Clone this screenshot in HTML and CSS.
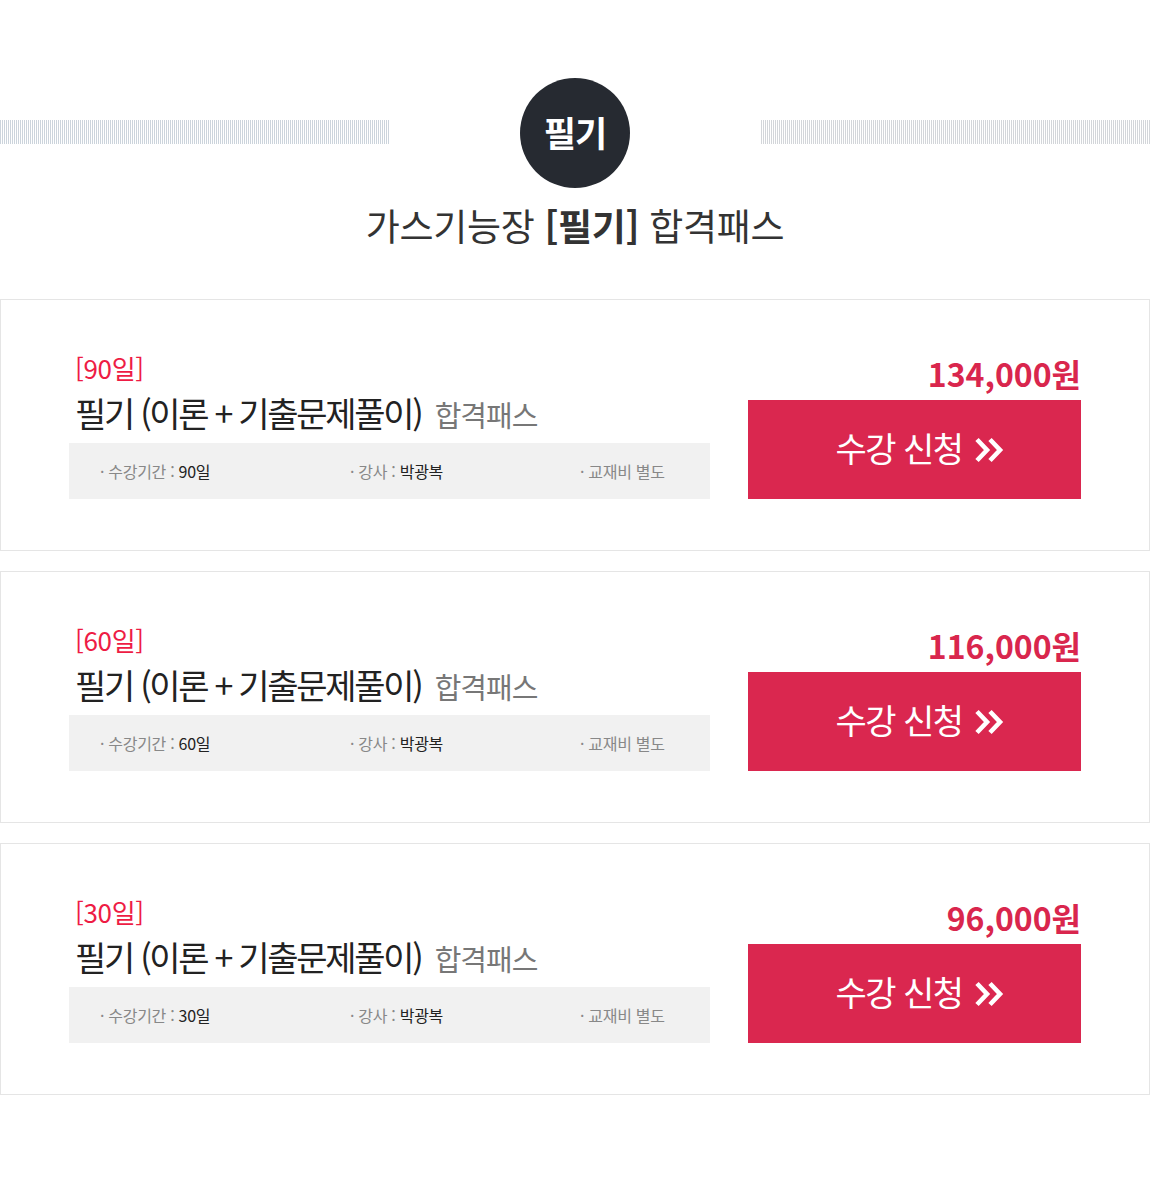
FILE: index.html
```html
<!DOCTYPE html>
<html lang="ko">
<head>
<meta charset="utf-8">
<link rel="stylesheet" href="styles.css">
</head>
<body>
<div class="page">
  <header class="head">
    <div class="head-row">
      <div class="stripe stripe-left"></div>
      <div class="badge-wrap"><div class="badge">필기</div></div>
      <div class="stripe stripe-right"></div>
    </div>
    <h1 class="head-title">가스기능장 <b>[필기]</b> 합격패스</h1>
  </header>

  <section class="card">
    <div class="card-left">
      <div class="tag">[90일]</div>
      <div class="title">필기 (이론 + 기출문제풀이) <span class="sub">합격패스</span></div>
      <div class="info">
        <div class="info-item">· 수강기간 : <span class="val">90일</span></div>
        <div class="info-item">· 강사 : <span class="val">박광복</span></div>
        <div class="info-item">· 교재비 별도</div>
      </div>
    </div>
    <div class="card-right">
      <div class="price">134,000원</div>
      <a class="btn" href="#">수강 신청 <svg class="chev" width="32" height="26" viewBox="0 0 32 26"><path d="M3 2.5 L13 13 L3 23.5 M16 2.5 L26 13 L16 23.5" fill="none" stroke="#fff" stroke-width="4.6"/></svg></a>
    </div>
  </section>

  <section class="card">
    <div class="card-left">
      <div class="tag">[60일]</div>
      <div class="title">필기 (이론 + 기출문제풀이) <span class="sub">합격패스</span></div>
      <div class="info">
        <div class="info-item">· 수강기간 : <span class="val">60일</span></div>
        <div class="info-item">· 강사 : <span class="val">박광복</span></div>
        <div class="info-item">· 교재비 별도</div>
      </div>
    </div>
    <div class="card-right">
      <div class="price">116,000원</div>
      <a class="btn" href="#">수강 신청 <svg class="chev" width="32" height="26" viewBox="0 0 32 26"><path d="M3 2.5 L13 13 L3 23.5 M16 2.5 L26 13 L16 23.5" fill="none" stroke="#fff" stroke-width="4.6"/></svg></a>
    </div>
  </section>

  <section class="card">
    <div class="card-left">
      <div class="tag">[30일]</div>
      <div class="title">필기 (이론 + 기출문제풀이) <span class="sub">합격패스</span></div>
      <div class="info">
        <div class="info-item">· 수강기간 : <span class="val">30일</span></div>
        <div class="info-item">· 강사 : <span class="val">박광복</span></div>
        <div class="info-item">· 교재비 별도</div>
      </div>
    </div>
    <div class="card-right">
      <div class="price">96,000원</div>
      <a class="btn" href="#">수강 신청 <svg class="chev" width="32" height="26" viewBox="0 0 32 26"><path d="M3 2.5 L13 13 L3 23.5 M16 2.5 L26 13 L16 23.5" fill="none" stroke="#fff" stroke-width="4.6"/></svg></a>
    </div>
  </section>
</div>
</body>
</html>
```

FILE: styles.css
```css
* { box-sizing: border-box; }
html, body { margin: 0; padding: 0; background: #fff; }
body {
  font-family: "Noto Sans CJK KR", "Noto Sans", sans-serif;
  color: #222;
}
.page { width: 1150px; padding-top: 78px; }

.head { margin-bottom: 51px; }
.head-row { display: flex; align-items: center; height: 110px; }
.stripe { height: 24px; flex: 0 0 389px; margin-bottom: 2px; }
.stripe-left { background: repeating-linear-gradient(90deg, #ccd4dc 0 1px, transparent 1px 2px); }
.stripe-right { background: repeating-linear-gradient(90deg, #d3d6da 0 1px, transparent 1px 2px); }
.badge-wrap { flex: 0 0 372px; display: flex; justify-content: center; }
.badge {
  width: 110px; height: 110px; border-radius: 50%;
  background: #262a31; color: #fff;
  display: flex; align-items: center; justify-content: center;
  font-size: 35px; font-weight: 700; letter-spacing: -1px;
  padding-bottom: 4px;
}
.head-title {
  margin: 14px 0 0; text-align: center;
  font-size: 37px; line-height: 46px; font-weight: 400; color: #333;
  letter-spacing: -0.3px;
}
.head-title b { font-weight: 700; }

.card {
  border: 1px solid #e5e5e5;
  padding: 53px 68px 51px;
  display: flex; align-items: flex-end; justify-content: space-between;
  margin-bottom: 20px;
}
.card-left { width: 641px; }
.tag { color: #ee1c44; font-size: 26px; line-height: 30px; padding-left: 6px; letter-spacing: -0.3px; }
.title {
  margin-top: 7px; font-size: 34px; height: 46px; line-height: 46px; padding-left: 6px;
  color: #222; letter-spacing: -2.3px; white-space: nowrap;
}
.title .sub { font-size: 29px; line-height: 1; color: #777; letter-spacing: -1px; margin-left: 6px; }
.info {
  margin-top: 7px; height: 56px; background: #f1f1f1;
  display: grid; grid-template-columns: 250px 230px auto; align-items: center;
  padding-left: 31px; font-size: 16px; color: #888; letter-spacing: -0.3px;
}
.info .val { color: #222; }

.card-right { width: 333px; display: flex; flex-direction: column; align-items: stretch; }
.price {
  text-align: right; color: #d9264d; font-size: 32px; line-height: 40px;
  font-weight: 700; letter-spacing: 0; margin-bottom: 7px;
}
.btn {
  height: 99px; background: #da274f; color: #fff;
  text-decoration: none; display: flex; align-items: center; justify-content: center;
  font-size: 34px; letter-spacing: -1.5px; padding: 0 0 4px 12px; gap: 11px;
}
.chev { display: block; margin-top: 4px; }
```
